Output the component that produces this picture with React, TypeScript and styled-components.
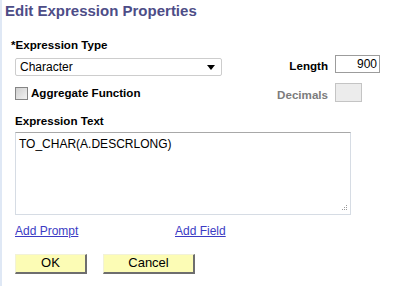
import React from "react";
import styled, { createGlobalStyle } from "styled-components";

const Global = createGlobalStyle`
  html, body { margin: 0; padding: 0; background: #ffffff; }
  body { font-family: "Liberation Sans", Arial, sans-serif; }
`;

const Page = styled.div`
  width: 393px;
  height: 286px;
  box-sizing: border-box;
  border-left: 2px solid #dfe8f5;
  background: #ffffff;
  overflow: hidden;
`;

const Title = styled.h1`
  margin: 0;
  padding: 1px 0 0 3px;
  font-size: 15px;
  line-height: 20px;
  font-weight: bold;
  color: #4d4d87;
`;

const Body = styled.div`
  padding: 17px 0 0 13px;
  display: flex;
  flex-direction: column;
`;

const Label = styled.div<{ $muted?: boolean }>`
  font-size: 11.6px;
  line-height: 14px;
  font-weight: bold;
  color: ${(p) => (p.$muted ? "#7c7c7c" : "#000000")};
  white-space: nowrap;
`;

const Required = styled(Label)`
  margin-left: -4px;
`;

const TopRow = styled.div`
  display: flex;
  justify-content: space-between;
  width: 365px;
`;

const LeftCol = styled.div`
  display: flex;
  flex-direction: column;
`;

const Select = styled.div`
  margin-top: 6px;
  width: 207px;
  height: 18px;
  box-sizing: border-box;
  border: 1px solid #cdcdcd;
  border-radius: 2px;
  display: flex;
  align-items: center;
  justify-content: space-between;
  padding: 0 6px 0 4px;
  font-size: 12px;
  color: #000;
`;

const CheckRow = styled.div`
  margin-top: 10px;
  display: flex;
  align-items: center;
  gap: 3px;
`;

const Check = styled.div`
  width: 13px;
  height: 13px;
  box-sizing: border-box;
  border: 1px solid #858585;
  background: linear-gradient(135deg, #cfcfcf 0%, #f2f2f2 100%);
`;

const RightGrid = styled.div`
  margin-top: 16px;
  display: grid;
  grid-template-columns: auto auto;
  column-gap: 7px;
  row-gap: 10px;
  align-items: center;
  justify-items: end;
`;

const RightLabel = styled(Label)`
  padding-top: 5px;
`;

const NumInput = styled.div<{ $w: number; $h: number; $disabled?: boolean }>`
  width: ${(p) => p.$w}px;
  height: ${(p) => p.$h}px;
  box-sizing: border-box;
  border: 1px solid ${(p) => (p.$disabled ? "#c4c4c4" : "#9c9c9c")};
  background: ${(p) => (p.$disabled ? "#ececec" : "#ffffff")};
  font-size: 12px;
  line-height: 16px;
  text-align: right;
  padding-right: 2px;
  justify-self: start;
`;

const SectionLabel = styled(Label)`
  margin-top: 12px;
`;

const TextBox = styled.div`
  position: relative;
  margin-top: 4px;
  width: 336px;
  height: 83px;
  box-sizing: border-box;
  border: 1px solid #d6dce4;
  border-top-color: #a8a8a8;
  padding: 4px 3px;
  font-size: 12px;
  line-height: 14px;
  color: #000;
`;

const Grip = styled.svg`
  position: absolute;
  right: 2px;
  bottom: 2px;
`;

const Links = styled.div`
  margin-top: 9px;
  display: flex;
`;

const Link = styled.a<{ $w: number }>`
  width: ${(p) => p.$w}px;
  font-size: 12px;
  line-height: 14px;
  color: #3b3bc4;
  text-decoration: underline;
  cursor: pointer;
`;

const Buttons = styled.div`
  margin-top: 16px;
  display: flex;
  gap: 16px;
`;

const Button = styled.button<{ $w: number }>`
  width: ${(p) => p.$w}px;
  height: 20px;
  box-sizing: border-box;
  margin: 0;
  padding: 0 0 2px 0;
  border: 1px solid #f2f2d8;
  border-right: 2px solid #6e6e6e;
  border-bottom: 2px solid #6e6e6e;
  background: #fcfcb5;
  font-family: "Liberation Sans", Arial, sans-serif;
  font-size: 13px;
  color: #000;
`;

export default function App() {
  return (
    <Page>
      <Global />
      <Title>Edit Expression Properties</Title>
      <Body>
        <TopRow>
          <LeftCol>
            <Required>*Expression Type</Required>
            <Select>
              <span>Character</span>
              <svg width="8" height="5" viewBox="0 0 8 5">
                <path d="M0 0 H8 L4 5 Z" fill="#000" />
              </svg>
            </Select>
            <CheckRow>
              <Check />
              <Label>Aggregate Function</Label>
            </CheckRow>
          </LeftCol>
          <RightGrid>
            <RightLabel>Length</RightLabel>
            <NumInput $w={45} $h={18}>900</NumInput>
            <RightLabel $muted>Decimals</RightLabel>
            <NumInput $w={27} $h={19} $disabled />
          </RightGrid>
        </TopRow>
        <SectionLabel>Expression Text</SectionLabel>
        <TextBox>
          TO_CHAR(A.DESCRLONG)
          <Grip width="7" height="7" viewBox="0 0 7 7">
            <rect x="5" y="0" width="1" height="1" fill="#9a9a9a" />
            <rect x="3" y="2" width="1" height="1" fill="#9a9a9a" />
            <rect x="5" y="2" width="1" height="1" fill="#9a9a9a" />
            <rect x="1" y="4" width="1" height="1" fill="#9a9a9a" />
            <rect x="3" y="4" width="1" height="1" fill="#9a9a9a" />
            <rect x="5" y="4" width="1" height="1" fill="#9a9a9a" />
          </Grip>
        </TextBox>
        <Links>
          <Link $w={160}>Add Prompt</Link>
          <Link $w={80}>Add Field</Link>
        </Links>
        <Buttons>
          <Button $w={72}>OK</Button>
          <Button $w={92}>Cancel</Button>
        </Buttons>
      </Body>
    </Page>
  );
}
